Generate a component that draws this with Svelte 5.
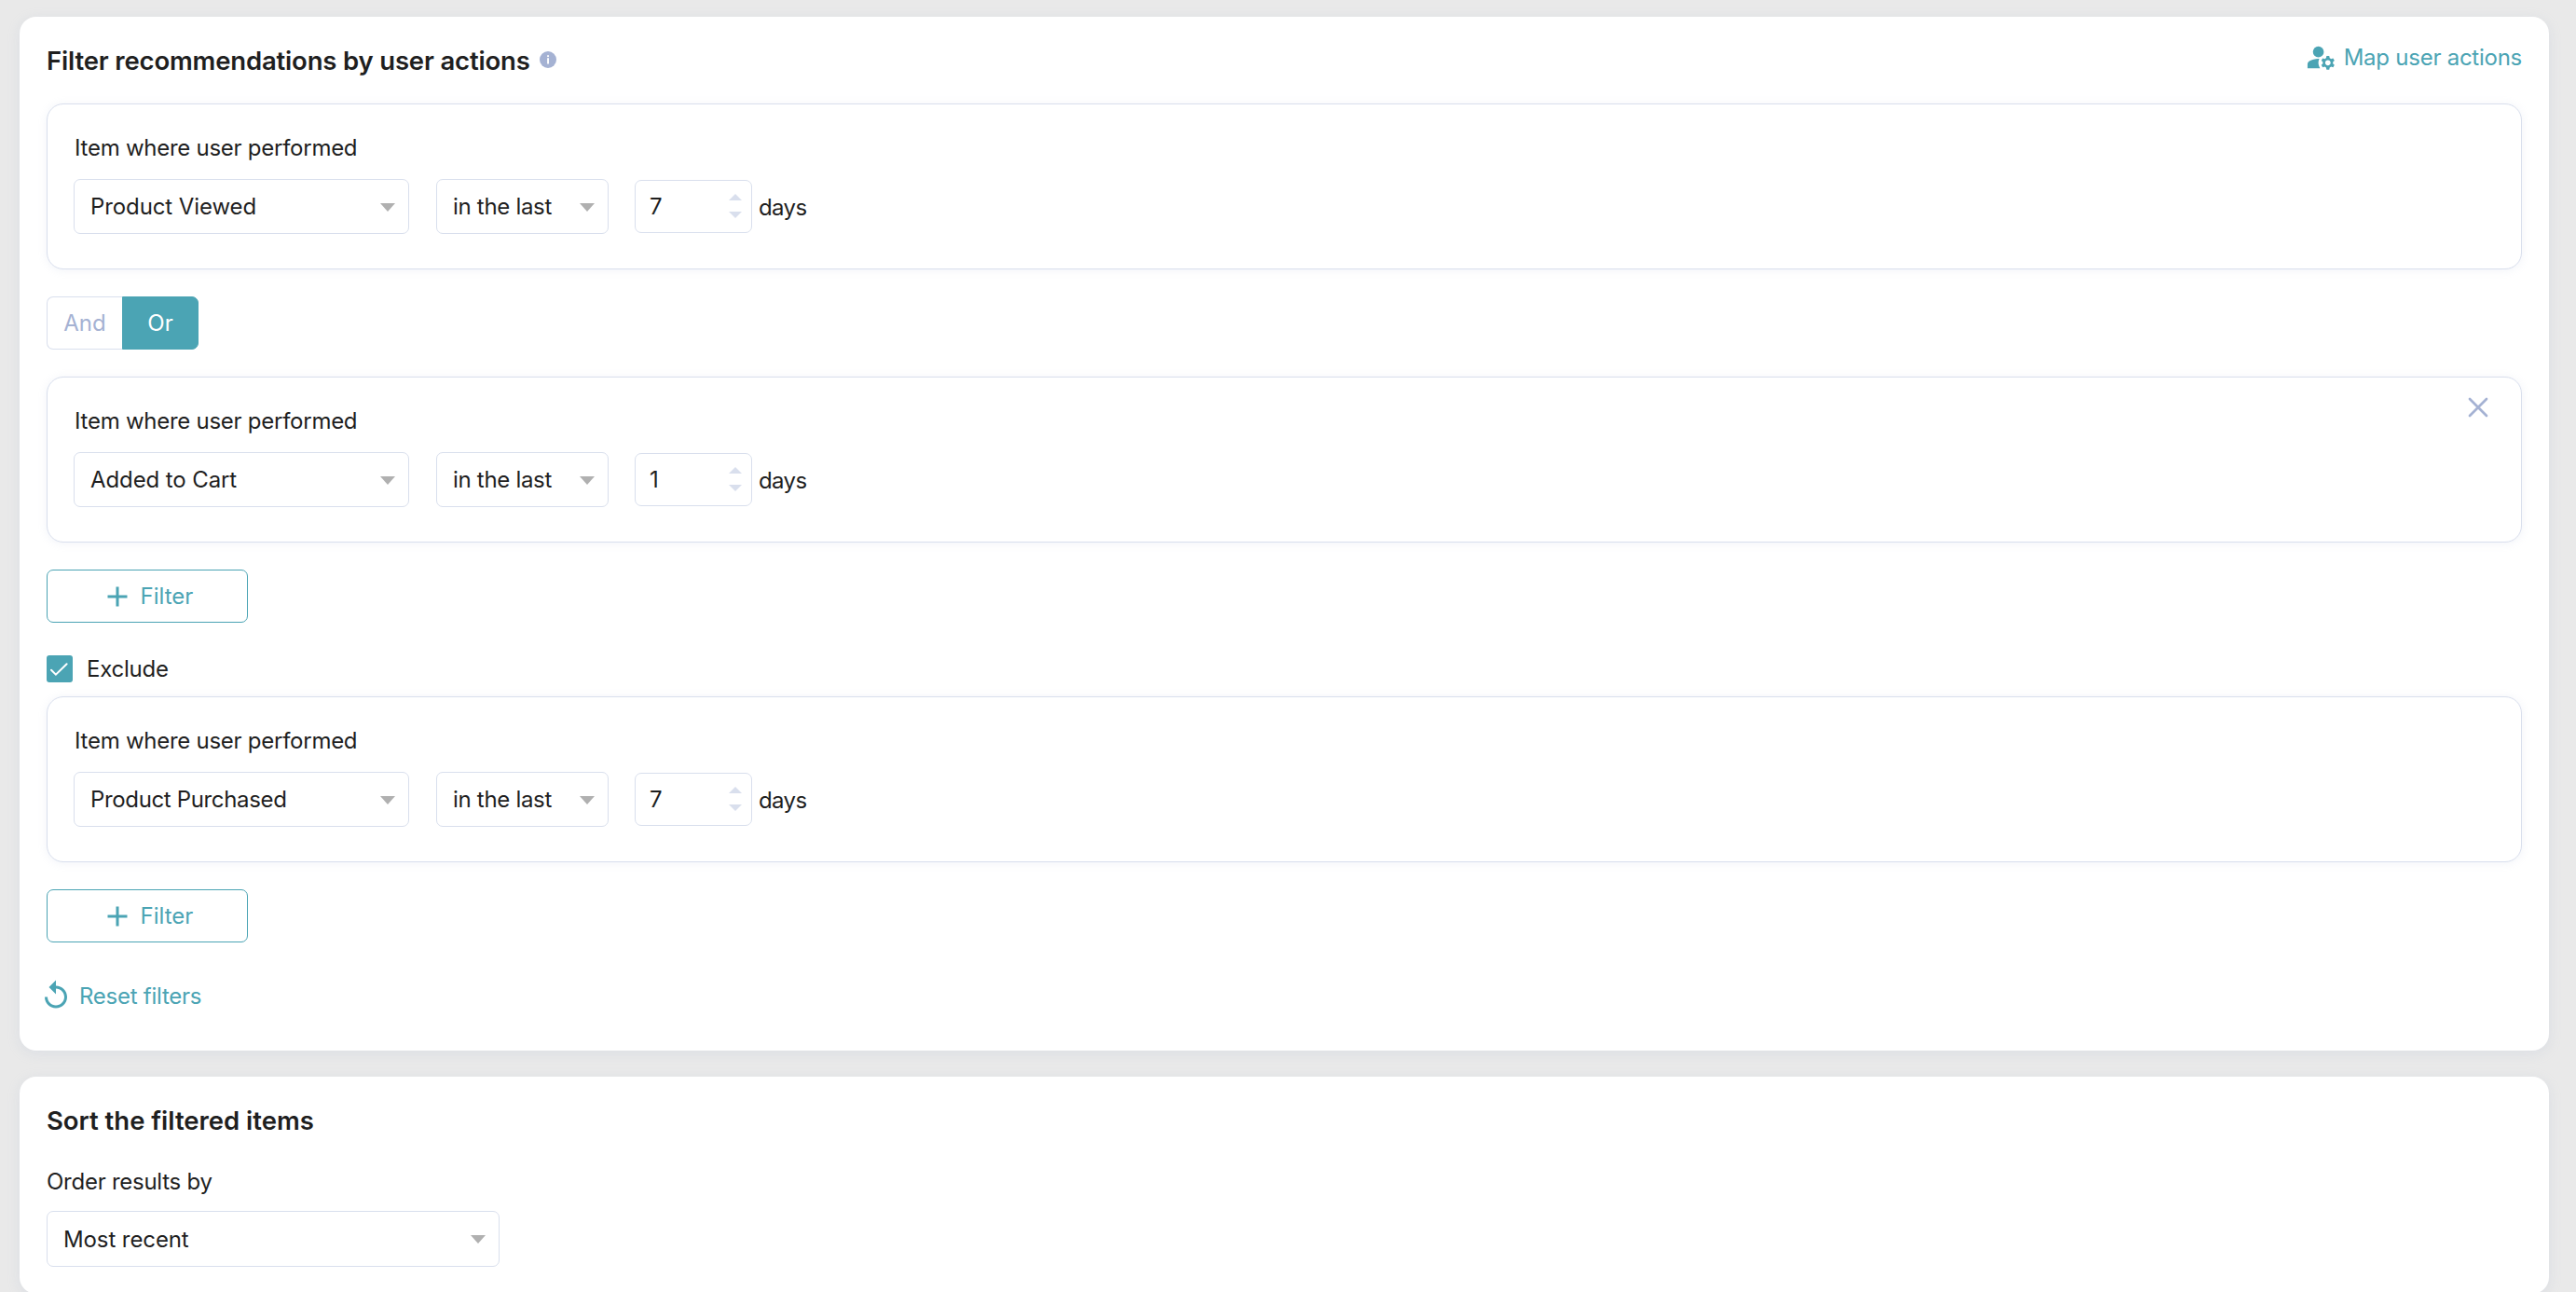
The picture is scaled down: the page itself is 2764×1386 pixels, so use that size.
<script>
	let includeFilters = [
		{ id: 1, action: 'Product Viewed', period: 'in the last', days: 7, removable: false },
		{ id: 2, action: 'Added to Cart', period: 'in the last', days: 1, removable: true }
	];

	let excludeFilters = [
		{ id: 3, action: 'Product Purchased', period: 'in the last', days: 7, removable: false }
	];

	let operator = 'Or';
	let exclude = true;
	let orderBy = 'Most recent';

	function removeFilter(id) {
		includeFilters = includeFilters.filter((f) => f.id !== id);
	}

	function addFilter(list) {
		return [
			...list,
			{ id: Date.now(), action: 'Product Viewed', period: 'in the last', days: 7, removable: true }
		];
	}

	function step(filter, by) {
		filter.days = Math.max(1, filter.days + by);
		includeFilters = includeFilters;
		excludeFilters = excludeFilters;
	}
</script>

{#snippet filterCard(filter)}
	<div class="card">
		<p class="label">Item where user performed</p>
		<div class="row">
			<div class="select action" class:long={filter.action.length > 14}>
				<span>{filter.action}</span>
				<i class="caret"></i>
			</div>
			<div class="select period">
				<span>{filter.period}</span>
				<i class="caret"></i>
			</div>
			<div class="number">
				<span>{filter.days}</span>
				<div class="steppers">
					<button class="up" aria-label="Increase" on:click={() => step(filter, 1)}></button>
					<button class="down" aria-label="Decrease" on:click={() => step(filter, -1)}></button>
				</div>
			</div>
			<span class="days">days</span>
		</div>
		{#if filter.removable}
			<button class="close" aria-label="Remove filter" on:click={() => removeFilter(filter.id)}>
				<svg width="36" height="36" viewBox="0 0 36 36">
					<path d="M9 9l18 18M27 9L9 27" />
				</svg>
			</button>
		{/if}
	</div>
{/snippet}

{#snippet plusIcon()}
	<svg width="36" height="36" viewBox="0 0 24 24">
		<path d="M19 13h-6v6h-2v-6H5v-2h6V5h2v6h6z" />
	</svg>
{/snippet}

<main>
	<section class="panel filters">
		<header>
			<h2 class="main-title">Filter recommendations by user actions</h2>
			<svg class="info" width="18" height="18" viewBox="0 0 18 18">
				<circle cx="9" cy="9" r="9" fill="#a5b2d3" />
				<path d="M8.1 4.2h1.9v1.7H8.1zM8.1 7.2h1.9v6.4H8.1z" fill="#fff" />
			</svg>
			<button class="link map">
				<svg width="35" height="35" viewBox="0 0 24 24">
					<circle cx="10" cy="8" r="4" />
					<path
						d="M10.67 13.02C10.45 13.01 10.23 13 10 13c-2.42 0-4.68.67-6.61 1.82C2.51 15.34 2 16.32 2 17.35V20h9.26C10.47 18.87 10 17.49 10 16c0-1.07.25-2.07.67-2.98z"
					/>
					<path
						d="M20.75 16c0-.22-.03-.42-.06-.63l1.14-1.01-1-1.73-1.45.49c-.32-.27-.68-.48-1.08-.63L18 11h-2l-.3 1.49c-.4.15-.76.36-1.08.63l-1.45-.49-1 1.73 1.14 1.01c-.03.21-.06.41-.06.63s.03.42.06.63l-1.14 1.01 1 1.73 1.45-.49c.32.27.68.48 1.08.63L16 21h2l.3-1.49c.4-.15.76-.36 1.08-.63l1.45.49 1-1.73-1.14-1.01c.03-.21.06-.41.06-.63zM17 18c-1.1 0-2-.9-2-2s.9-2 2-2 2 .9 2 2-.9 2-2 2z"
					/>
				</svg>
				<span>Map user actions</span>
			</button>
		</header>

		{#each includeFilters as filter, i (filter.id)}
			{#if i > 0}
				<div class="toggle">
					<button class:active={operator === 'And'} on:click={() => (operator = 'And')}>And</button>
					<button class:active={operator === 'Or'} on:click={() => (operator = 'Or')}>Or</button>
				</div>
			{/if}
			{@render filterCard(filter)}
		{/each}

		<button class="add" on:click={() => (includeFilters = addFilter(includeFilters))}>
			{@render plusIcon()}
			<span>Filter</span>
		</button>

		<button class="checkbox" on:click={() => (exclude = !exclude)}>
			<svg width="28" height="29" viewBox="0 0 28 29">
				<rect width="28" height="29" rx="3" fill={exclude ? '#4ba4b4' : '#d9dfed'} />
				{#if exclude}
					<path d="M5 15.8l4.9 4.9L21.6 9.2" />
				{/if}
			</svg>
			<span>Exclude</span>
		</button>

		{#if exclude}
			{#each excludeFilters as filter (filter.id)}
				{@render filterCard(filter)}
			{/each}
			<button class="add" on:click={() => (excludeFilters = addFilter(excludeFilters))}>
				{@render plusIcon()}
				<span>Filter</span>
			</button>
		{/if}

		<button class="link reset">
			<svg width="36" height="36" viewBox="0 0 24 24">
				<path
					d="M12 5V1L7 6l5 5V7c3.31 0 6 2.69 6 6s-2.69 6-6 6-6-2.69-6-6H4c0 4.42 3.58 8 8 8s8-3.58 8-8-3.58-8-8-8z"
				/>
			</svg>
			<span>Reset filters</span>
		</button>
	</section>

	<section class="panel sort">
		<h2 class="sort-title">Sort the filtered items</h2>
		<p class="label">Order results by</p>
		<div class="select order">
			<span>{orderBy}</span>
			<i class="caret"></i>
		</div>
	</section>
</main>

<style>
	:global(body) {
		background: #e9e9e9;
		overflow: hidden;
	}

	main {
		box-sizing: border-box;
		height: 1386px;
		padding: 18px 29px 0 21px;
		overflow: hidden;
		display: flex;
		flex-direction: column;
		gap: 28px;
		font-family: Inter, 'Liberation Sans', sans-serif;
		font-size: 24px;
		line-height: 30px;
		letter-spacing: -0.1px;
		color: #1f1f1f;
	}

	main :global(*) {
		box-sizing: border-box;
	}

	h2,
	p {
		margin: 0;
	}

	button {
		padding: 0;
		border: 0;
		background: none;
		font: inherit;
		letter-spacing: inherit;
		color: inherit;
		cursor: pointer;
	}

	svg {
		display: block;
		flex: none;
	}

	.panel {
		flex: none;
		display: flex;
		flex-direction: column;
		align-items: flex-start;
		background: #fff;
		border-radius: 18px;
		box-shadow: 0 3px 14px rgba(165, 178, 211, 0.2);
	}

	.filters {
		height: 1109px;
		padding: 23px 29px 0;
	}

	.sort {
		height: 233px;
		padding: 27px 29px 0;
	}

	header {
		display: flex;
		align-items: flex-start;
		width: 100%;
		height: 70px;
	}

	h2 {
		font-size: 27.5px;
		font-weight: 600;
		line-height: 40px;
		white-space: nowrap;
	}

	.main-title {
		margin-top: 4px;
		letter-spacing: -0.17px;
	}

	.sort-title {
		letter-spacing: -0.02px;
	}

	.info {
		margin: 14px 0 0 10px;
	}

	.label {
		padding-left: 1px;
		letter-spacing: -0.26px;
	}

	.link {
		display: flex;
		align-items: center;
		height: 40px;
		color: #4ba4b4;
		fill: #4ba4b4;
		letter-spacing: -0.25px;
		white-space: nowrap;
	}

	.link span {
		padding-top: 2px;
	}

	.map {
		margin-left: auto;
		gap: 7px;
	}

	.card {
		position: relative;
		flex: none;
		width: 100%;
		height: 178px;
		padding: 32px 28px 0;
		border: 1px solid #d9dfed;
		border-radius: 18px;
		background: #fff;
		box-shadow: 0 1px 10px rgba(165, 178, 211, 0.16);
	}

	.row {
		display: flex;
		align-items: center;
		margin-top: 18px;
	}

	.select {
		display: flex;
		align-items: center;
		justify-content: space-between;
		height: 59px;
		padding: 0 14px 0 17px;
		border: 1px solid #d9dfed;
		border-radius: 7px;
		background: #fff;
	}

	.action {
		width: 360px;
	}

	.action.long {
		letter-spacing: -0.35px;
	}

	.period {
		width: 185px;
		margin-left: 29px;
		letter-spacing: -0.3px;
	}

	.order {
		width: 486px;
		height: 60px;
		margin-top: 16px;
	}

	.order span {
		padding-top: 2px;
	}

	.caret {
		margin-top: 1px;
		border: 8.5px solid transparent;
		border-top: 9px solid #b0b0b0;
		border-bottom: 0;
	}

	.number {
		display: flex;
		align-items: center;
		justify-content: space-between;
		width: 126px;
		height: 57px;
		margin-left: 28px;
		padding: 0 10px 0 15px;
		border: 1px solid #d9dfed;
		border-radius: 7px;
	}

	.steppers {
		display: flex;
		flex-direction: column;
		gap: 12px;
		margin-top: -1px;
	}

	.up,
	.down {
		width: 14px;
		height: 7px;
		background: #d9dfed;
	}

	.up {
		clip-path: polygon(50% 0, 100% 100%, 0 100%);
	}

	.down {
		clip-path: polygon(0 0, 100% 0, 50% 100%);
	}

	.days {
		margin: 2px 0 0 7px;
		letter-spacing: -0.6px;
	}

	.close {
		position: absolute;
		top: 14px;
		right: 28px;
	}

	.close path {
		stroke: #a5b2d3;
		stroke-width: 2.7;
		stroke-linecap: round;
	}

	.toggle {
		display: flex;
		width: 163px;
		height: 57px;
		margin: 29px 0;
		letter-spacing: 0;
	}

	.toggle button {
		flex: 1;
		border: 1px solid #d9dfed;
		color: #a5b2d3;
	}

	.toggle button:first-child {
		border-right: 0;
		border-radius: 7px 0 0 7px;
	}

	.toggle button:last-child {
		border-radius: 0 7px 7px 0;
	}

	.toggle button.active {
		border-color: #4ba4b4;
		background: #4ba4b4;
		color: #fff;
	}

	.add {
		display: flex;
		align-items: center;
		gap: 7px;
		width: 216px;
		height: 57px;
		margin-top: 29px;
		padding-left: 56.5px;
		border: 1px solid #4ba4b4;
		border-radius: 7px;
		color: #4ba4b4;
		fill: #4ba4b4;
		letter-spacing: 0;
	}

	.checkbox {
		display: flex;
		align-items: center;
		gap: 15px;
		height: 29px;
		margin: 35px 0 15px;
		letter-spacing: -0.25px;
	}

	.checkbox path {
		fill: none;
		stroke: #fff;
		stroke-width: 2;
		stroke-linecap: round;
	}

	.reset {
		margin: 37px 0 0 -8px;
		gap: 7px;
	}

	.sort .label {
		margin-top: 31px;
		padding-left: 0;
	}
</style>
